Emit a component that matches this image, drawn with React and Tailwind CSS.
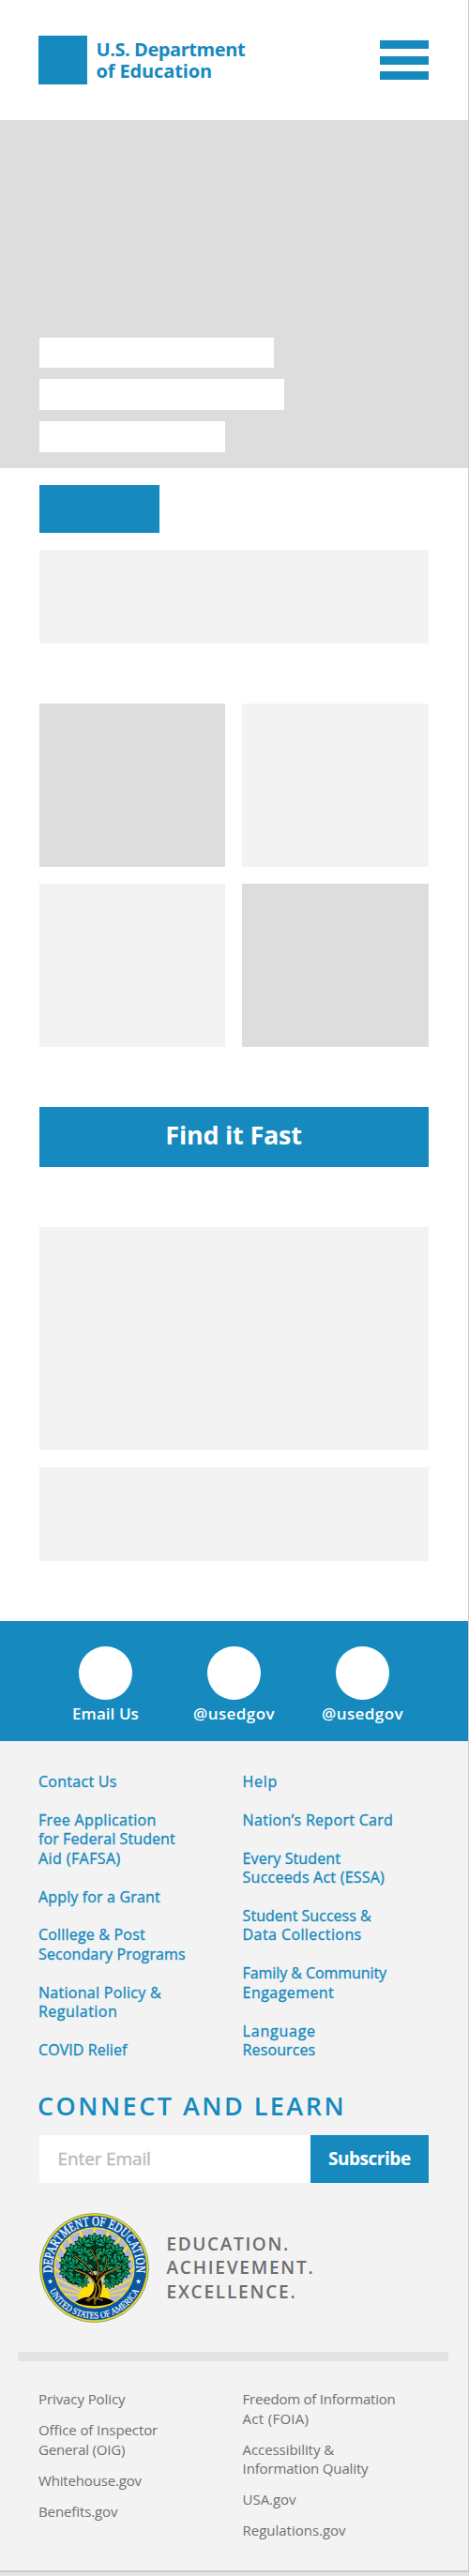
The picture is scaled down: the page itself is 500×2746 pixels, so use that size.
const LINKS_LEFT = [
  [["Contact Us", "tracking-[0.27px]"]],
  [
    ["Free Application", "tracking-[0.33px]"],
    ["for Federal Student", "tracking-[0.1px]"],
    ["Aid (FAFSA)", "tracking-[0.42px]"],
  ],
  [["Apply for a Grant", "tracking-[0.15px]"]],
  [
    ["Colllege & Post", "tracking-[0.19px]"],
    ["Secondary Programs", "tracking-[0.12px]"],
  ],
  [
    ["National Policy &", "tracking-[0.29px]"],
    ["Regulation", "tracking-[0.48px]"],
  ],
  [["COVID Relief", "tracking-[0.07px]"]],
];

const LINKS_RIGHT = [
  [["Help", "tracking-[0.73px]"]],
  [["Nation’s Report Card", "tracking-[0.3px]"]],
  [
    ["Every Student", "tracking-[0.09px]"],
    ["Succeeds Act (ESSA)", "tracking-[0.23px]"],
  ],
  [
    ["Student Success &", "tracking-[0.03px]"],
    ["Data Collections", "tracking-[0.41px]"],
  ],
  [
    ["Family & Community", "tracking-[-0.07px]"],
    ["Engagement", "tracking-[0.44px]"],
  ],
  [
    ["Language", "tracking-[0.77px]"],
    ["Resources", "tracking-[0.11px]"],
  ],
];

const LEGAL_LEFT = [
  [["Privacy Policy", "tracking-[-0.09px]"]],
  [
    ["Office of Inspector", "tracking-[-0.09px]"],
    ["General (OIG)", "tracking-[-0.19px]"],
  ],
  [["Whitehouse.gov", "tracking-[-0.17px]"]],
  [["Benefits.gov", "tracking-[-0.11px]"]],
];

const LEGAL_RIGHT = [
  [
    ["Freedom of Information", "tracking-[-0.22px]"],
    ["Act (FOIA)", "tracking-[0.29px]"],
  ],
  [
    ["Accessibility &", "tracking-[-0.08px]"],
    ["Information Quality", "tracking-[-0.15px]"],
  ],
  [["USA.gov", "tracking-[-0.04px]"]],
  [["Regulations.gov", "tracking-[-0.02px]"]],
];

function LinkColumn({ items, className }) {
  return (
    <ul className={className}>
      {items.map((lines) => (
        <li key={lines[0][0]}>
          {lines.map(([text, tracking]) => (
            <span key={text} className={`block whitespace-nowrap ${tracking}`}>
              {text}
            </span>
          ))}
        </li>
      ))}
    </ul>
  );
}

function Social({ label, className }) {
  return (
    <div className="flex w-[137px] flex-col items-center">
      <div className="size-[56.5px] rounded-full bg-white" />
      <span className={`mt-[3px] text-[17px] leading-6 font-semibold text-white ${className}`}>{label}</span>
    </div>
  );
}

// Clusters of foliage: centre x, centre y, radius, direction the leaves fan towards.
const CLUSTERS = [
  [59, 43, 9, 90], [50, 55, 8, 150], [68, 55, 8, 30],
  [59, 31, 9, 270], [47, 34, 9, 240], [71, 33, 9, 300], [37, 42, 9, 210], [81, 42, 9, 330],
  [48, 44, 8, 200], [70, 45, 8, 340], [30, 53, 8, 180], [88, 52, 8, 0],
  [39, 55, 8, 160], [79, 56, 8, 20], [29, 62, 7.5, 120], [89, 62, 7.5, 60],
  [37, 68, 7.5, 100], [82, 69, 7.5, 80], [46, 73, 6.5, 90], [75, 74, 6.5, 90],
];

const RAYS = [-84, -74, -64, -54, -43, -33, -23, -12, 0, 12, 23, 33, 43, 54, 64, 74, 84];

function Star({ x, y }) {
  return (
    <path
      transform={`translate(${x} ${y})`}
      d="M0-2.8 .7-.9 2.7-.9 1.1.4 1.7 2.4 0 1.2-1.7 2.4-1.1.4-2.7-.9-.7-.9Z"
      fill="#fff"
    />
  );
}

function Seal() {
  return (
    <svg viewBox="0 0 117 117" className="size-[117px] shrink-0" role="img">
      <defs>
        <path id="ringTop" d="M13.97 64.76A45 45 0 1 1 103.03 64.76" />
        <path id="ringBottom" d="M10.5 82A53 53 0 0 0 106.5 82" />
        <clipPath id="inner">
          <circle cx="58.5" cy="58.5" r="42" />
        </clipPath>
      </defs>
      <circle cx="58.5" cy="58.5" r="58" fill="#fbdc12" stroke="#7ba39a" strokeWidth="1" />
      <circle cx="58.5" cy="58.5" r="55.6" fill="#0a56a4" stroke="#3c5c60" strokeWidth=".5" />
      <circle cx="58.5" cy="58.5" r="43.2" fill="#fbdc12" />
      <g clipPath="url(#inner)">
        <circle cx="58.5" cy="58.5" r="42" fill="#adb5da" />
        {RAYS.map((a) => (
          <path key={a} d="M57.9 90 57 0H60L59.1 90Z" fill="#f9dc35" transform={`rotate(${a} 58.5 90)`} />
        ))}
        <circle cx="58.5" cy="92" r="17" fill="#fede0b" />
        <path d="M38 95Q47 89 53 90 58 86 65 90 73 90 80 95 70 99.3 58.5 99.3 47 99.3 38 95Z" fill="#060606" />
      </g>
      <path
        d="M58 25Q70 24 77 33 90 37 93 50 97 60 91 67 87 78 76 77 68 74 70 67 64 62 59 62 52 62 49 68 50 77 41 77 28 76 26 66 20 60 24 50 27 38 40 33 47 24 58 25Z"
        fill="#073322"
      />
      {CLUSTERS.map(([x, y, r, dir], i) => (
        <g key={i} transform={`translate(${x} ${y}) rotate(${dir}) scale(${r / 10})`}>
          {[-125, -80, -40, 0, 40, 80, 125].map((a) => (
            <path
              key={a}
              d="M0 0Q5-5.4 11-.2 6 4.8 0 0Z"
              fill="#0aa36c"
              stroke="#04140c"
              strokeWidth=".9"
              transform={`rotate(${a})`}
            />
          ))}
        </g>
      ))}
      <g fill="none" strokeLinecap="round" strokeLinejoin="round">
        <g stroke="#090805">
          <path d="M60 92Q68 82 61 72 51 63 38 61" strokeWidth="3.6" />
          <path d="M55 93Q66 84 61 70" strokeWidth="8" />
          <path d="M62 75Q65 63 79 61L86 58M61 73Q66 55 58 45L54 38M59 69Q55 60 45 51L38 46M65 66Q72 58 72 48" strokeWidth="2.3" />
        </g>
        <g stroke="#a67c20">
          <path d="M52 94Q63 86 60 77 56 68 47 64L38 61" strokeWidth="1.5" />
          <path d="M60 93Q68 83 62 75 66 65 79 61L86 58" strokeWidth="1.6" />
          <path d="M61 71Q66 55 58 45L54 38M57 66Q55 58 45 51L38 46M66 65Q72 58 72 48M60 50 65 42" strokeWidth="1.1" />
          <path d="M50 93Q57 88 67 93M59 87V97" strokeWidth="1.4" />
        </g>
      </g>
      <Star x={11.6} y={73} />
      <Star x={105.6} y={73} />
      <g fill="#fff" className="font-['Liberation_Serif',serif]">
        <text fontSize="14" stroke="#fff" strokeWidth=".3">
          <textPath href="#ringTop" startOffset="1" textLength="152" lengthAdjust="spacingAndGlyphs">
            DEPARTMENT OF EDUCATION
          </textPath>
        </text>
        <text fontSize="10" stroke="#fff" strokeWidth=".15">
          <textPath href="#ringBottom" startOffset="1" textLength="118" lengthAdjust="spacingAndGlyphs">
            UNITED STATES OF AMERICA
          </textPath>
        </text>
      </g>
    </svg>
  );
}

export default function App() {
  return (
    <div className="flex h-[2746px] w-[500px] flex-col bg-[#e4e4e4] font-['Open_Sans','Noto_Sans',sans-serif]">
      <div className="flex h-[2742px] w-[500px] flex-col border-r border-b-2 border-[#cbcbcb] bg-white">
        <header className="flex h-32 items-center justify-between pr-[42.3px] pl-[41.4px]">
          <div className="flex items-center gap-[9.6px] text-[#168abf]">
            <div className="size-[51.5px] bg-[#168abf]" />
            <div className="text-[20px] leading-[23px] font-bold whitespace-nowrap">
              <div className="tracking-[-0.43px]">U.S. Department</div>
              <div className="tracking-[-0.12px]">of Education</div>
            </div>
          </div>
          <button className="flex w-[51.6px] flex-col gap-[7.6px]" aria-label="Menu">
            <span className="h-[9px] bg-[#168abf]" />
            <span className="h-[9px] bg-[#168abf]" />
            <span className="h-[9px] bg-[#168abf]" />
          </button>
        </header>

        <section className="flex h-[371px] flex-col justify-end gap-[12.7px] bg-[#dddddd] pb-[17.5px] pl-[41.5px]">
          <div className="h-[32.2px] w-[250px] bg-white" />
          <div className="h-[32.2px] w-[261.5px] bg-white" />
          <div className="h-[32.2px] w-[198.5px] bg-white" />
        </section>

        <main className="flex h-[1229px] flex-col pt-[18px] pr-[42.5px] pl-[41.6px]">
          <div className="h-[51.3px] w-[128px] bg-[#168abf]" />
          <div className="mt-[17.7px] h-[100px] bg-[#f3f3f3]" />
          <div className="mt-16 grid grid-cols-2 gap-[18px]">
            <div className="h-[174px] bg-[#dddddd]" />
            <div className="h-[174px] bg-[#f3f3f3]" />
            <div className="h-[174px] bg-[#f3f3f3]" />
            <div className="h-[174px] bg-[#dddddd]" />
          </div>
          <button className="mt-16 flex h-16 items-center justify-center bg-[#168abf] pb-[3px] text-[27px] leading-8 font-bold tracking-[-0.22px] text-white">
            Find it Fast
          </button>
          <div className="mt-16 h-[238px] bg-[#f3f3f3]" />
          <div className="mt-[18px] h-[100px] bg-[#f3f3f3]" />
        </main>

        <section className="flex h-32 justify-center bg-[#168abf] pt-[27px]">
          <Social label="Email Us" className="tracking-[0.06px]" />
          <Social label="@usedgov" className="tracking-[0.43px]" />
          <Social label="@usedgov" className="tracking-[0.43px]" />
        </section>

        <footer className="flex grow flex-col bg-[#f3f3f3] pt-[33px]">
          <div className="flex pl-[41px] text-[16px] leading-[20.43px] text-[#168abf] [-webkit-text-stroke:0.35px_#168abf]">
            <LinkColumn items={LINKS_LEFT} className="flex w-[217.6px] flex-col gap-[20.43px]" />
            <LinkColumn items={LINKS_RIGHT} className="flex flex-col gap-[20.43px]" />
          </div>

          <h2 className="mt-[33.1px] pl-[40px] text-[27px] leading-8 font-semibold tracking-[2.48px] whitespace-nowrap text-[#168abf]">
            CONNECT AND LEARN
          </h2>
          <div className="mt-[15px] mr-[42.5px] ml-[41.6px] flex h-[51.4px]">
            <div className="flex grow items-center bg-white pl-[20px] text-[19px] tracking-[-0.14px] text-[#b9b9b9] [-webkit-text-stroke:0.35px_#b9b9b9]">
              Enter Email
            </div>
            <button className="flex w-[125.4px] items-center justify-center bg-[#168abf] text-[19px] font-bold tracking-[-0.45px] text-white">
              Subscribe
            </button>
          </div>

          <div className="mt-8 flex items-center pl-[42px]">
            <Seal />
            <div className="ml-[18.5px] pt-[1px] text-[19px] leading-[25.5px] font-semibold whitespace-nowrap text-[#6d6e70]">
              <div className="tracking-[1.65px]">EDUCATION.</div>
              <div className="tracking-[1.78px]">ACHIEVEMENT.</div>
              <div className="tracking-[1.81px]">EXCELLENCE.</div>
            </div>
          </div>

          <div className="mt-[31px] mr-[20.8px] ml-[19px] h-[10px] bg-[#e4e4e4]" />

          <div className="mt-[30.2px] flex pl-[41px] text-[15px] leading-[20.4px] text-[#6f7072]">
            <LinkColumn items={LEGAL_LEFT} className="flex w-[217.6px] flex-col gap-[12.6px]" />
            <LinkColumn items={LEGAL_RIGHT} className="flex flex-col gap-[12.6px]" />
          </div>
        </footer>
      </div>
    </div>
  );
}
